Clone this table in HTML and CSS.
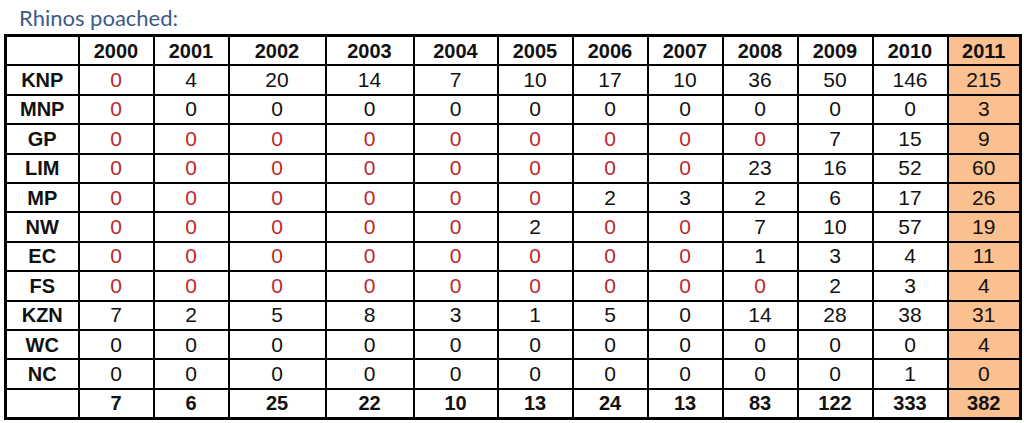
FILE: index.html
```html
<!DOCTYPE html>
<html>
<head>
<meta charset="utf-8">
<link rel="stylesheet" href="styles.css">
</head>
<body>
<div class="title">Rhinos poached:</div>
<table class="grid">
  <colgroup>
    <col class="c-label"><col class="c-a"><col class="c-a"><col class="c-2002"><col class="c-2003"><col class="c-2004">
    <col class="c-b"><col class="c-b"><col class="c-b"><col class="c-b"><col class="c-b"><col class="c-b"><col class="c-last">
  </colgroup>
  <thead>
    <tr><th></th><th>2000</th><th>2001</th><th>2002</th><th>2003</th><th>2004</th><th>2005</th><th>2006</th><th>2007</th><th>2008</th><th>2009</th><th>2010</th><th class="hl">2011</th></tr>
  </thead>
  <tbody>
    <tr><th>KNP</th><td class="r">0</td><td>4</td><td>20</td><td>14</td><td>7</td><td>10</td><td>17</td><td>10</td><td>36</td><td>50</td><td>146</td><td class="hl">215</td></tr>
    <tr><th>MNP</th><td class="r">0</td><td>0</td><td>0</td><td>0</td><td>0</td><td>0</td><td>0</td><td>0</td><td>0</td><td>0</td><td>0</td><td class="hl">3</td></tr>
    <tr><th>GP</th><td class="r">0</td><td class="r">0</td><td class="r">0</td><td class="r">0</td><td class="r">0</td><td class="r">0</td><td class="r">0</td><td class="r">0</td><td class="r">0</td><td>7</td><td>15</td><td class="hl">9</td></tr>
    <tr><th>LIM</th><td class="r">0</td><td class="r">0</td><td class="r">0</td><td class="r">0</td><td class="r">0</td><td class="r">0</td><td class="r">0</td><td class="r">0</td><td>23</td><td>16</td><td>52</td><td class="hl">60</td></tr>
    <tr><th>MP</th><td class="r">0</td><td class="r">0</td><td class="r">0</td><td class="r">0</td><td class="r">0</td><td class="r">0</td><td>2</td><td>3</td><td>2</td><td>6</td><td>17</td><td class="hl">26</td></tr>
    <tr><th>NW</th><td class="r">0</td><td class="r">0</td><td class="r">0</td><td class="r">0</td><td class="r">0</td><td>2</td><td class="r">0</td><td class="r">0</td><td>7</td><td>10</td><td>57</td><td class="hl">19</td></tr>
    <tr><th>EC</th><td class="r">0</td><td class="r">0</td><td class="r">0</td><td class="r">0</td><td class="r">0</td><td class="r">0</td><td class="r">0</td><td class="r">0</td><td>1</td><td>3</td><td>4</td><td class="hl">11</td></tr>
    <tr><th>FS</th><td class="r">0</td><td class="r">0</td><td class="r">0</td><td class="r">0</td><td class="r">0</td><td class="r">0</td><td class="r">0</td><td class="r">0</td><td class="r">0</td><td>2</td><td>3</td><td class="hl">4</td></tr>
    <tr><th>KZN</th><td>7</td><td>2</td><td>5</td><td>8</td><td>3</td><td>1</td><td>5</td><td>0</td><td>14</td><td>28</td><td>38</td><td class="hl">31</td></tr>
    <tr><th>WC</th><td>0</td><td>0</td><td>0</td><td>0</td><td>0</td><td>0</td><td>0</td><td>0</td><td>0</td><td>0</td><td>0</td><td class="hl">4</td></tr>
    <tr><th>NC</th><td>0</td><td>0</td><td>0</td><td>0</td><td>0</td><td>0</td><td>0</td><td>0</td><td>0</td><td>0</td><td>1</td><td class="hl">0</td></tr>
    <tr class="total"><th></th><td>7</td><td>6</td><td>25</td><td>22</td><td>10</td><td>13</td><td>24</td><td>13</td><td>83</td><td>122</td><td>333</td><td class="hl">382</td></tr>
  </tbody>
</table>
</body>
</html>
```
FILE: styles.css
```css
html, body {
  margin: 0;
  padding: 0;
  background: #ffffff;
}
body {
  padding: 0 0 0 4px;
}
.title {
  font-family: Lato, "Open Sans", sans-serif;
  font-size: 22px;
  line-height: 24px;
  height: 34px;
  box-sizing: border-box;
  padding: 6px 0 0 15px;
  color: #3b5a86;
}
.grid {
  border-collapse: collapse;
  table-layout: fixed;
  width: 1017px;
  font-family: "Liberation Sans", Arial, sans-serif;
  font-size: 21px;
  color: #111111;
  border: 3px solid #000;
}
.grid th, .grid td {
  border: 2px solid #000;
  text-align: center;
  padding: 0;
  height: 27.4px;
  line-height: 22px;
}
.grid th { font-weight: bold; font-size: 20px; }
.grid td { font-weight: normal; }
.grid .total td { font-weight: bold; font-size: 20px; }
.grid .r { color: #c0262c; }
.grid .hl { background: #fac090; }
.c-label { width: 73px; }
.c-a { width: 75px; }
.c-2002 { width: 97px; }
.c-2003 { width: 88px; }
.c-2004 { width: 84px; }
.c-b { width: 75px; }
.c-last { width: 73px; }
```
